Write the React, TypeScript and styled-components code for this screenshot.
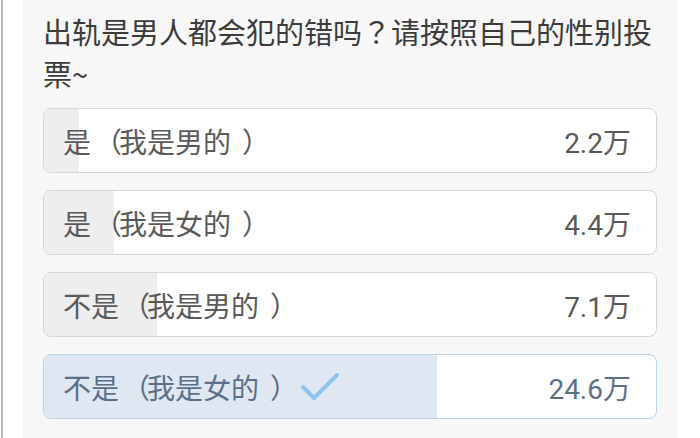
import React from "react";
import styled, { createGlobalStyle } from "styled-components";

const Global = createGlobalStyle`
  html, body { margin: 0; padding: 0; background: #ffffff; }
  body { font-family: Roboto, "Noto Sans CJK TC", sans-serif; }
`;

const Page = styled.div`
  display: flex;
  width: 700px;
  height: 438px;
  background: #ffffff;
  overflow: hidden;
`;

const EdgeRule = styled.div`
  width: 2px;
  margin-left: 1px;
  background: #b8b8b8;
  flex: none;
`;

const Gutter = styled.div`
  width: 20px;
  flex: none;
`;

const Panel = styled.div`
  width: 654px;
  flex: none;
  background: #f7f7f7;
  padding: 10px 20px 0 20px;
  box-sizing: border-box;
  display: flex;
  flex-direction: column;
`;

const Title = styled.div`
  font-family: "Noto Sans CJK TC", sans-serif;
  font-size: 29px;
  line-height: 42px;
  color: #3c3c3c;
  margin-bottom: 14px;
`;

const Options = styled.div`
  display: flex;
  flex-direction: column;
  gap: 17px;
`;

const Option = styled.div<{ $selected?: boolean }>`
  position: relative;
  height: 65px;
  box-sizing: border-box;
  border: 1px solid ${(p) => (p.$selected ? "#b9d3ea" : "#d6d6d6")};
  border-radius: 8px;
  background: #ffffff;
  overflow: hidden;
  display: flex;
  align-items: center;
  justify-content: space-between;
  padding: 0 25px 0 19px;
  color: ${(p) => (p.$selected ? "#5b7088" : "#5a5a5a")};
  font-size: 28px;
`;

const Fill = styled.div<{ $selected?: boolean }>`
  position: absolute;
  left: 0;
  top: 0;
  bottom: 0;
  background: ${(p) => (p.$selected ? "#dfe8f2" : "#eeeeee")};
`;

const Label = styled.span`
  position: relative;
  display: flex;
  align-items: center;
  gap: 14px;
  font-family: "Noto Sans CJK TC", sans-serif;
`;

const LabelText = styled.span`
  white-space: nowrap;
`;

const Paren = styled.span<{ $indent: number }>`
  display: inline-block;
  width: 1em;
  text-align: left;
  white-space: nowrap;
  text-indent: ${(p) => p.$indent}px;
`;

const Count = styled.span`
  position: relative;
  font-family: Roboto, "Noto Sans CJK TC", sans-serif;
`;

const Check = () => (
  <svg width="38" height="30" viewBox="0 0 38 30">
    <path
      d="M2 15 L13 26 L36 3"
      fill="none"
      stroke="#8ec4ee"
      strokeWidth="4"
      strokeLinecap="round"
      strokeLinejoin="round"
    />
  </svg>
);

const WhiteEdge = styled.div`
  flex: 1;
  background: #ffffff;
`;

const data = [
  { head: "是", inner: "我是男的", count: 2.2 },
  { head: "是", inner: "我是女的", count: 4.4 },
  { head: "不是", inner: "我是男的", count: 7.1 },
  { head: "不是", inner: "我是女的", count: 24.6, selected: true },
];

const total = data.reduce((s, d) => s + d.count, 0);

export default function App() {
  return (
    <>
      <Global />
      <Page>
        <EdgeRule />
        <Gutter />
        <Panel>
          <Title>出轨是男人都会犯的错吗？请按照自己的性别投票~</Title>
          <Options>
            {data.map((d) => (
              <Option key={d.head + d.inner} $selected={d.selected}>
                <Fill
                  $selected={d.selected}
                  style={{ width: `${(d.count / total) * 100}%` }}
                />
                <Label>
                  <LabelText>
                    {d.head}
                    <Paren $indent={3}>（</Paren>
                    {d.inner}
                    <Paren $indent={11}>）</Paren>
                  </LabelText>
                  {d.selected && <Check />}
                </Label>
                <Count>{d.count}万</Count>
              </Option>
            ))}
          </Options>
        </Panel>
        <WhiteEdge />
      </Page>
    </>
  );
}
